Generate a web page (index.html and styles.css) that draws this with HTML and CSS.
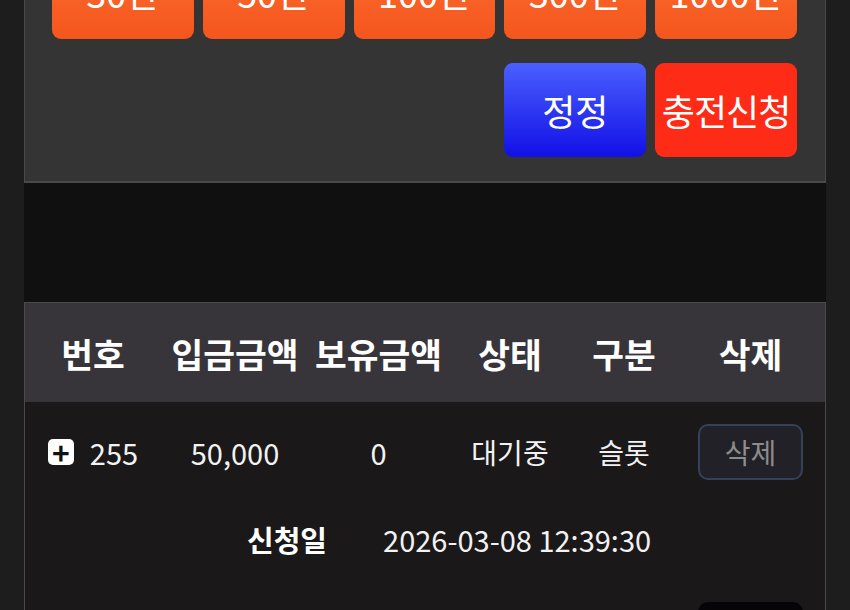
FILE: index.html
```html
<!DOCTYPE html>
<html>
<head>
    <title>충전신청</title>
    <link rel="stylesheet" href="styles.css">
</head>
<body>
    <div id="page">
        <!-- Amount picker and submit buttons -->
        <div class="panel charge-panel">
            <div class="amount-grid">
                <button class="btn amount">30만</button>
                <button class="btn amount">50만</button>
                <button class="btn amount">100만</button>
                <button class="btn amount">300만</button>
                <button class="btn amount">1000만</button>
                <button class="btn reset">정정</button>
                <button class="btn submit">충전신청</button>
            </div>
        </div>

        <div class="spacer"></div>

        <!-- Deposit history -->
        <div class="panel list-panel">
            <div class="row head">
                <div>번호</div>
                <div>입금금액</div>
                <div>보유금액</div>
                <div>상태</div>
                <div>구분</div>
                <div>삭제</div>
            </div>

            <div class="row item">
                <div class="num"><span class="plus">+</span>255</div>
                <div class="digits">50,000</div>
                <div class="digits">0</div>
                <div>대기중</div>
                <div>슬롯</div>
                <div><button class="del-btn">삭제</button></div>
            </div>
            <div class="detail">
                <span class="detail-label">신청일</span>
                <span class="digits">2026-03-08 12:39:30</span>
            </div>

            <div class="row item next">
                <div></div>
                <div></div>
                <div></div>
                <div></div>
                <div></div>
                <div><button class="del-btn dark"></button></div>
            </div>
        </div>
    </div>
</body>
</html>
```

FILE: styles.css
```css
body {
    margin: 0;
    background: #1d1d1d;
    font-family: "Noto Sans CJK KR", "Noto Sans", sans-serif;
    color: #f2f2f2;
    overflow: hidden;
}

#page {
    width: 802px;
    margin: -80px auto 0 24px; /* page is scrolled a little */
}

.panel {
    border: 1px solid #4a4a4a;
}

.charge-panel {
    background: #343434;
    border-bottom-width: 2px;
    padding: 24px 28px 24px 27px;
}

.amount-grid {
    display: grid;
    grid-template-columns: repeat(5, 1fr);
    column-gap: 9px;
    row-gap: 24px;
}

.btn {
    height: 94px;
    border: none;
    border-radius: 9px;
    color: #fff;
    font-family: inherit;
    font-size: 36px;
    padding: 0;
    white-space: nowrap;
}

.amount {
    background: linear-gradient(#ff6e30, #f4561d);
}

.reset {
    grid-column: 4;
    background: linear-gradient(#4a60ff, #1210e6);
}

.submit {
    background: #fe2b16;
    letter-spacing: -1px;
}

.spacer {
    height: 119px;
    background: #111011;
}

.list-panel {
    background: #1b1819;
    border-bottom: none;
}

.row {
    display: grid;
    grid-template-columns: 136px 148px 139px 124px 104px 149px;
    align-items: center;
    text-align: center;
}

.head {
    height: 99px;
    background: #37353a;
    font-size: 34.5px;
    font-weight: bold;
    color: #fff;
}

.item {
    height: 100px;
    font-size: 28px;
}

.digits {
    font-size: 29px;
}

.num {
    display: flex;
    align-items: center;
    justify-content: center;
    gap: 16px;
    font-size: 29px;
}

.plus {
    width: 26px;
    height: 26px;
    border-radius: 5px;
    background: #fff;
    color: #111;
    font-size: 30px;
    font-weight: bold;
    line-height: 26px;
}

.del-btn {
    width: 105px;
    height: 56px;
    border: 2px solid #33425a;
    border-radius: 10px;
    background: #222127;
    color: #8c8c8c;
    font-family: inherit;
    font-size: 28px;
}

.next {
    align-items: start;
}

.del-btn.dark {
    background: #060406;
    border-color: #060406;
    margin-top: 20px;
    vertical-align: top;
}

.detail {
    display: flex;
    align-items: center;
    gap: 56px;
    height: 74px;
    padding: 0 0 6px 222px;
    font-size: 29px;
}

.detail-label {
    font-weight: bold;
    color: #fff;
}
```
